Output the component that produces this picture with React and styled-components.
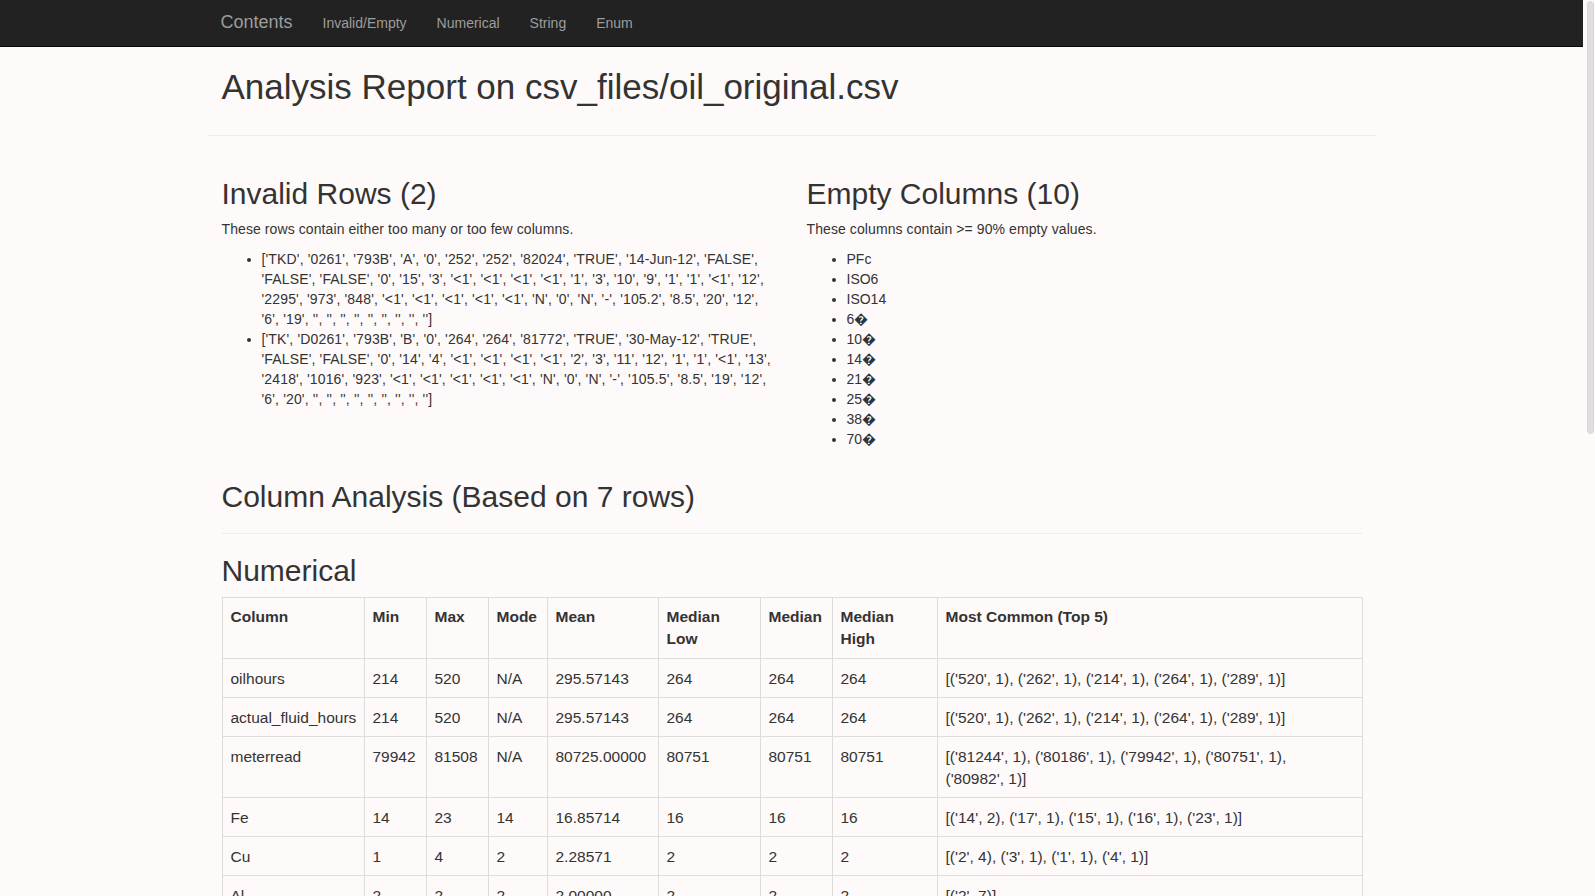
import React from 'react';
import styled, { createGlobalStyle } from 'styled-components';

const GlobalStyle = createGlobalStyle`
  body {
    margin: 0;
    padding-right: 12px;
    background: #fefaf9;
    color: #333;
    font-family: "Liberation Sans", Arial, Helvetica, sans-serif;
    font-size: 14px;
    line-height: 1.42857;
  }
`;

// the browser scrollbar of the reference, drawn over the right edge
const ScrollThumb = styled.div`
  position: fixed;
  top: 1px;
  right: 1px;
  width: 7px;
  height: 433px;
  background: #dfdfdf;
  border: 1px solid #d6d6d6;
  box-sizing: border-box;
  border-radius: 4px;
`;

const Navbar = styled.nav`
  height: 46px;
  background: #222;
  border-bottom: 1px solid #080808;
`;

const NavInner = styled.div`
  width: 1170px;
  margin: 0 auto;
  display: flex;
  align-items: flex-start;
`;

const Brand = styled.a`
  padding: 12px 15px 0 14px;
  font-size: 18px;
  line-height: 20px;
  color: #9d9d9d;
  text-decoration: none;
`;

const NavLink = styled.a`
  padding: 13px 15px 0;
  font-size: 14px;
  line-height: 20px;
  color: #9d9d9d;
  text-decoration: none;
`;

const Container = styled.div`
  width: 1170px;
  margin: 0 auto;
`;

const PageHeader = styled.div`
  padding: 0 15px 28px;
  border-bottom: 1px solid #eee;
  margin-bottom: 21px;
`;

const Title = styled.h1`
  margin: 21px 0 0;
  font-size: 35px;
  font-weight: 500;
  line-height: 1.1;
`;

const Row = styled.div`
  display: grid;
  grid-template-columns: 1fr 1fr;
`;

const Col = styled.div`
  padding: 0 15px;
`;

const Heading = styled.h2`
  margin: ${({ $top = 20 }) => $top}px 0 10px;
  font-size: 30px;
  font-weight: 500;
  line-height: 1.1;
`;

const Lead = styled.p`
  margin: 2px 0 11px;
  letter-spacing: 0.09px;
`;

const List = styled.ul`
  margin: 0 0 10px;
  padding-left: 40px;
`;

const RowItem = styled.li`
  letter-spacing: 0.15px;
`;

const Section = styled.div`
  padding: 0 15px;
`;

const SectionHeader = styled.div`
  padding-bottom: 10px;
  border-bottom: 1px solid #eee;
  margin-bottom: 20px;
`;

const Table = styled.table`
  width: 100%;
  table-layout: fixed;
  border-collapse: collapse;
  border: 1px solid #ddd;
  font-size: 15.5px;
  line-height: 22px;
  margin-bottom: 20px;
`;

const Th = styled.th`
  padding: 8px;
  border: 1px solid #ddd;
  text-align: left;
  vertical-align: top;
  font-weight: 700;
`;

const Td = styled.td`
  padding: 9px ${({ $list }) => ($list ? 30 : 8)}px 7px 8px;
  border: 1px solid #ddd;
  text-align: left;
  vertical-align: top;
`;

const invalidRows = [
  "['TKD', '0261', '793B', 'A', '0', '252', '252', '82024', 'TRUE', '14-Jun-12', 'FALSE', 'FALSE', 'FALSE', '0', '15', '3', '<1', '<1', '<1', '<1', '1', '3', '10', '9', '1', '1', '<1', '12', '2295', '973', '848', '<1', '<1', '<1', '<1', '<1', 'N', '0', 'N', '-', '105.2', '8.5', '20', '12', '6', '19', '', '', '', '', '', '', '', '', '']",
  "['TK', 'D0261', '793B', 'B', '0', '264', '264', '81772', 'TRUE', '30-May-12', 'TRUE', 'FALSE', 'FALSE', '0', '14', '4', '<1', '<1', '<1', '<1', '2', '3', '11', '12', '1', '1', '<1', '13', '2418', '1016', '923', '<1', '<1', '<1', '<1', '<1', 'N', '0', 'N', '-', '105.5', '8.5', '19', '12', '6', '20', '', '', '', '', '', '', '', '', '']",
];

const emptyColumns = ['PFc', 'ISO6', 'ISO14', '6\uFFFD', '10\uFFFD', '14\uFFFD', '21\uFFFD', '25\uFFFD', '38\uFFFD', '70\uFFFD'];

const numericHead = ['Column', 'Min', 'Max', 'Mode', 'Mean', 'Median Low', 'Median', 'Median High', 'Most Common (Top 5)'];
const numericWidths = [142, 62, 62, 59, 111, 102, 72, 105, 425];

const numericRows = [
  ['oilhours', '214', '520', 'N/A', '295.57143', '264', '264', '264', "[('520', 1), ('262', 1), ('214', 1), ('264', 1), ('289', 1)]"],
  ['actual_fluid_hours', '214', '520', 'N/A', '295.57143', '264', '264', '264', "[('520', 1), ('262', 1), ('214', 1), ('264', 1), ('289', 1)]"],
  ['meterread', '79942', '81508', 'N/A', '80725.00000', '80751', '80751', '80751', "[('81244', 1), ('80186', 1), ('79942', 1), ('80751', 1), ('80982', 1)]"],
  ['Fe', '14', '23', '14', '16.85714', '16', '16', '16', "[('14', 2), ('17', 1), ('15', 1), ('16', 1), ('23', 1)]"],
  ['Cu', '1', '4', '2', '2.28571', '2', '2', '2', "[('2', 4), ('3', 1), ('1', 1), ('4', 1)]"],
  ['Al', '2', '2', '2', '2.00000', '2', '2', '2', "[('2', 7)]"],
  ['Si', '9', '12', '10', '10.28571', '10', '10', '10', "[('10', 3), ('9', 2), ('11', 1), ('12', 1)]"],
  ['Zn', '2201', '2418', 'N/A', '2302.42857', '2295', '2295', '2295', "[('2295', 1), ('2201', 1), ('2418', 1), ('2310', 1), ('2333', 1)]"],
  ['P', '901', '1016', 'N/A', '960.14286', '962', '962', '962', "[('973', 1), ('901', 1), ('1016', 1), ('962', 1), ('944', 1)]"],
  ['Ca', '811', '923', 'N/A', '861.00000', '848', '848', '848', "[('848', 1), ('923', 1), ('811', 1), ('870', 1), ('855', 1)]"],
  ['V100', '104.8', '105.9', '105.2', '105.31429', '105.2', '105.2', '105.2', "[('105.2', 3), ('105.5', 2), ('104.8', 1), ('105.9', 1)]"],
  ['TBN', '8.1', '8.9', '8.5', '8.51429', '8.5', '8.5', '8.5', "[('8.5', 4), ('8.1', 1), ('8.9', 1), ('8.6', 1)]"],
  ['ISO4', '18', '21', '19', '19.42857', '19', '19', '19', "[('19', 3), ('20', 2), ('18', 1), ('21', 1)]"],
];

const stringRows = [
  ['unit', '3', "[('TKD', 4), ('TK', 2), ('TKB', 1)]"],
  ['sample_id', '7', "[('0261', 1), ('D0261', 1), ('0262', 1), ('0263', 1), ('0264', 1)]"],
];

const App = () => (
  <>
    <GlobalStyle />
    <ScrollThumb />
    <Navbar>
      <NavInner>
        <Brand href="#">Contents</Brand>
        <NavLink href="#invalid">Invalid/Empty</NavLink>
        <NavLink href="#numerical">Numerical</NavLink>
        <NavLink href="#string">String</NavLink>
        <NavLink href="#enum">Enum</NavLink>
      </NavInner>
    </Navbar>
    <Container>
      <PageHeader>
        <Title>Analysis Report on csv_files/oil_original.csv</Title>
      </PageHeader>
      <Row id="invalid">
        <Col>
          <Heading>Invalid Rows (2)</Heading>
          <Lead>These rows contain either too many or too few columns.</Lead>
          <List>
            {invalidRows.map((row) => (
              <RowItem key={row}>{row}</RowItem>
            ))}
          </List>
        </Col>
        <Col>
          <Heading>Empty Columns (10)</Heading>
          <Lead>These columns contain &gt;= 90% empty values.</Lead>
          <List>
            {emptyColumns.map((name) => (
              <li key={name}>{name}</li>
            ))}
          </List>
        </Col>
      </Row>
      <Section>
        <SectionHeader>
          <Heading>Column Analysis (Based on 7 rows)</Heading>
        </SectionHeader>
        <Heading id="numerical" $top={0}>Numerical</Heading>
        <Table>
          <colgroup>
            {numericWidths.map((w, i) => (
              <col key={i} style={{ width: w }} />
            ))}
          </colgroup>
          <thead>
            <tr>
              {numericHead.map((h) => (
                <Th key={h}>{h}</Th>
              ))}
            </tr>
          </thead>
          <tbody>
            {numericRows.map((row) => (
              <tr key={row[0]}>
                {row.map((cell, i) => (
                  <Td key={i} $list={i === row.length - 1}>{cell}</Td>
                ))}
              </tr>
            ))}
          </tbody>
        </Table>
        <Heading id="string">String</Heading>
        <Table>
          <colgroup>
            <col style={{ width: 180 }} />
            <col style={{ width: 100 }} />
            <col />
          </colgroup>
          <thead>
            <tr>
              <Th>Column</Th>
              <Th>Unique</Th>
              <Th>Most Common (Top 5)</Th>
            </tr>
          </thead>
          <tbody>
            {stringRows.map((row) => (
              <tr key={row[0]}>
                {row.map((cell, i) => (
                  <Td key={i} $list={i === row.length - 1}>{cell}</Td>
                ))}
              </tr>
            ))}
          </tbody>
        </Table>
      </Section>
    </Container>
  </>
);

export default App;
